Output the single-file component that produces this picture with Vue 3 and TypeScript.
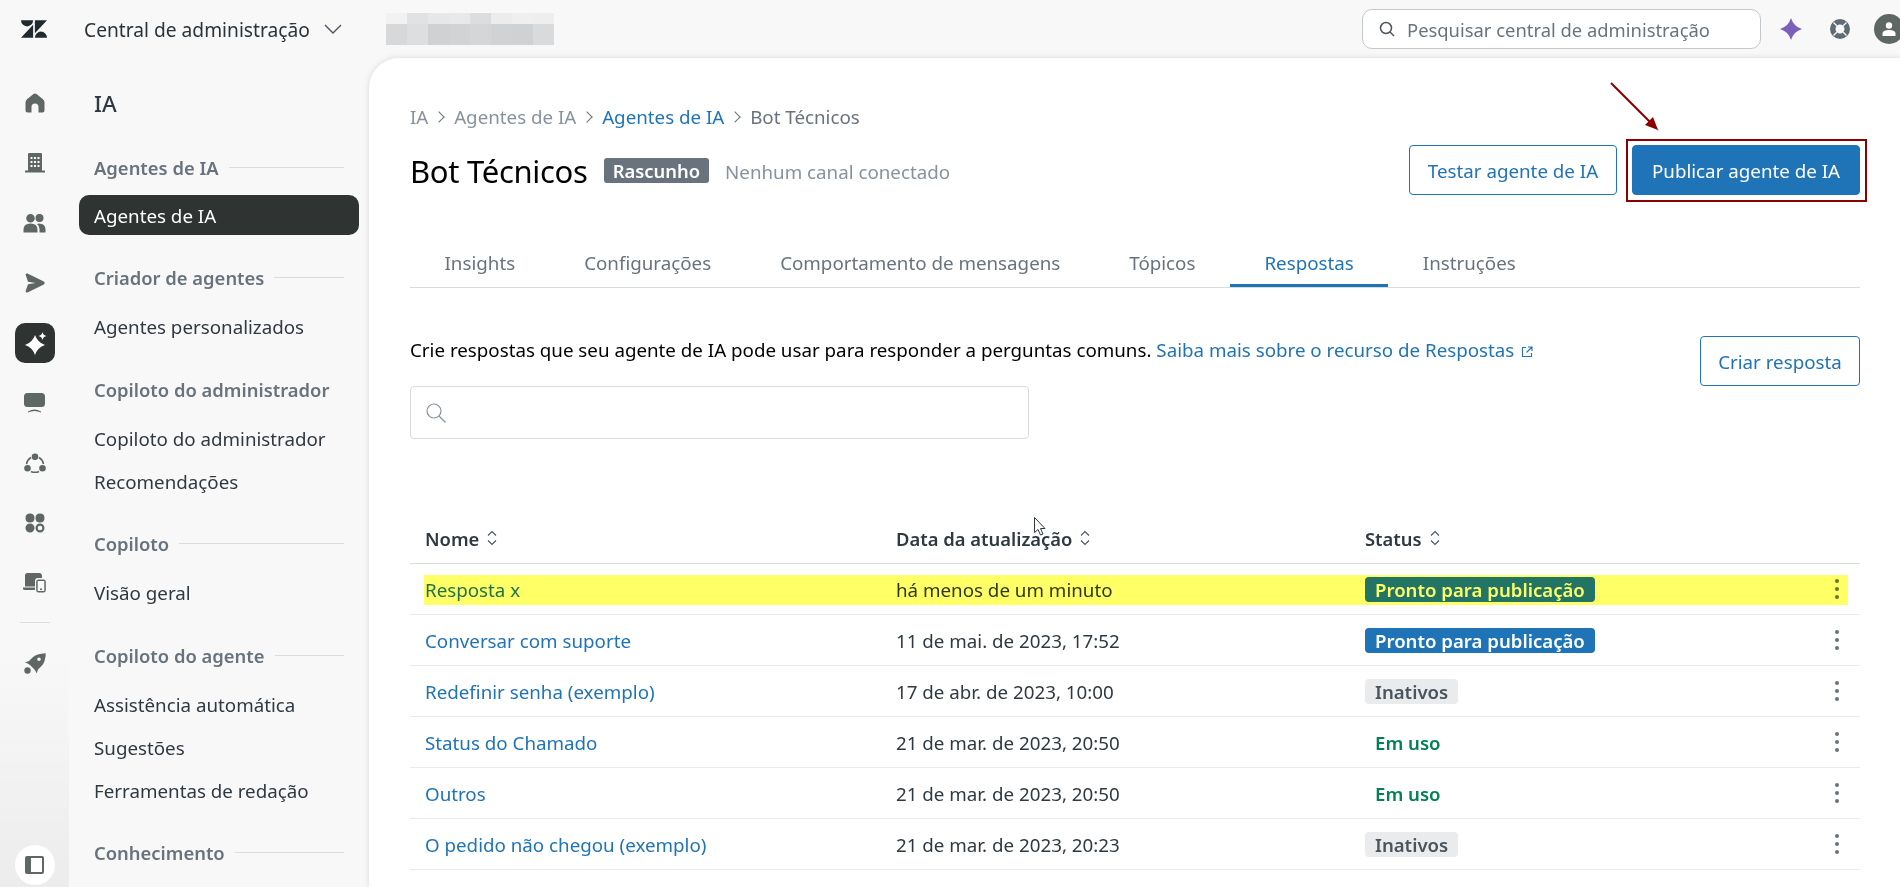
<template>
  <div class="admin">
    <header class="topbar">
      <svg class="logo" viewBox="0 0 30 20" width="26" height="20">
        <path d="M14 5V20H0ZM14 0A7 7 0 0 1 0 0ZM16 15V0H30ZM16 20A7 7 0 0 1 30 20Z" />
      </svg>
      <span class="product">Central de administração</span>
      <svg class="product-chevron" viewBox="0 0 18 10" width="18" height="10">
        <path d="M1 1l8 8 8-8" />
      </svg>
      <div class="blurred">
        <i v-for="(shade, i) in blurPixels" :key="i" :style="{ background: shade }"></i>
      </div>
      <div class="top-search">
        <svg viewBox="0 0 16 16" width="16" height="16">
          <circle cx="7" cy="7" r="5.5" />
          <path d="M11 11l4 4" />
        </svg>
        <span>Pesquisar central de administração</span>
      </div>
      <svg class="top-star" viewBox="0 0 22 22" width="22" height="22">
        <path d="M11 0Q13.500 8.500 22 11Q13.500 13.500 11 22Q8.500 13.500 0 11Q8.500 8.500 11 0Z" />
      </svg>
      <svg class="top-help" viewBox="0 0 20 20" width="20" height="20">
        <path
          fill-rule="evenodd"
          d="M10 0A10 10 0 1 0 10 20A10 10 0 1 0 10 0ZM10 5.500A4.500 4.500 0 1 1 10 14.500A4.500 4.500 0 1 1 10 5.500Z"
        />
        <path class="help-cuts" d="M3.500 3.500l3.300 3.300M16.500 3.500l-3.300 3.300M3.500 16.500l3.300-3.300M16.500 16.500l-3.300-3.300" />
      </svg>
      <div class="avatar">
        <svg viewBox="0 0 14 14" width="14" height="14">
          <circle cx="7" cy="3.500" r="3.200" />
          <path d="M.5 14V11.500Q.5 8 7 8T13.500 11.500V14Z" />
        </svg>
      </div>
    </header>

    <div class="body">
      <nav class="rail">
        <div v-for="icon in railIcons" :key="icon.name" class="rail-item">
          <svg v-if="icon.name === 'ai'" viewBox="0 0 40 40" width="40" height="40">
            <rect width="40" height="40" rx="10" fill="#2f3332" />
            <path fill="#fff" :d="icon.d" />
          </svg>
          <svg v-else :viewBox="`0 0 ${icon.w} 20`" :width="icon.w" height="20">
            <path fill-rule="evenodd" :d="icon.d" />
            <path v-if="icon.line" class="rail-line" :d="icon.line" />
          </svg>
        </div>
        <hr class="rail-sep" />
        <svg class="rail-rocket" viewBox="0 0 22 21" width="22" height="21">
          <path
            fill-rule="evenodd"
            d="M21.800.2Q12.500.5 8.500 4.500L5 8 1 9.500Q4 10 6 12L10 16Q12 18 12.500 20.500L14 16.500 17.500 13Q21.500 9 21.800.2ZM15 4.500A1.800 1.800 0 1 1 15 8.100A1.800 1.800 0 1 1 15 4.500Z"
          />
          <circle cx="3.500" cy="17.500" r="3.200" />
        </svg>
        <button class="rail-collapse" type="button">
          <svg viewBox="0 0 19 18" width="19" height="18">
            <path
              fill-rule="evenodd"
              d="M2 0H17Q19 0 19 2V16Q19 18 17 18H2Q0 18 0 16V2Q0 0 2 0ZM6 2V16H17V2Z"
            />
          </svg>
        </button>
      </nav>

      <aside class="subnav">
        <h2>IA</h2>
        <section v-for="group in navGroups" :key="group.title" class="nav-group">
          <h3>
            <span>{{ group.title }}</span>
            <i v-if="group.rule"></i>
          </h3>
          <a
            v-for="item in group.items"
            :key="item"
            class="nav-item"
            :class="{ active: item === 'Agentes de IA' }"
          >{{ item }}</a>
        </section>
      </aside>

      <main class="card">
        <ol class="crumbs">
          <li>IA</li>
          <li>Agentes de IA</li>
          <li class="crumb-link">Agentes de IA</li>
          <li class="crumb-last">Bot Técnicos</li>
        </ol>

        <div class="title-row">
          <h1>Bot Técnicos</h1>
          <span class="draft">Rascunho</span>
          <span class="channel">Nenhum canal conectado</span>
          <button class="btn test" type="button">Testar agente de IA</button>
          <button class="btn publish" type="button">Publicar agente de IA</button>
        </div>

        <div class="tabs">
          <span v-for="tab in tabs" :key="tab" class="tab" :class="{ current: tab === 'Respostas' }">{{ tab }}</span>
        </div>

        <div class="intro">
          <div class="intro-main">
            <p>
              Crie respostas que seu agente de IA pode usar para responder a perguntas comuns.
              <a>Saiba mais sobre o recurso de Respostas
                <svg viewBox="0 0 12 12" width="12" height="12">
                  <path d="M5 1.500H1.500V10.500H10.500V7M7 1H11V5M11 1L5.500 6.500" />
                </svg>
              </a>
            </p>
            <div class="search">
              <svg viewBox="0 0 20 20" width="20" height="20">
                <circle cx="8" cy="8" r="7" />
                <path d="M13 13l6.500 6.500" />
              </svg>
            </div>
          </div>
          <button class="btn create" type="button">Criar resposta</button>
        </div>

        <div class="table">
          <div class="row head">
            <span v-for="col in columns" :key="col">
              {{ col }}
              <svg viewBox="0 0 12 16" width="12" height="16">
                <path d="M2 5.500L6 1.500L10 5.500M2 10.500L6 14.500L10 10.500" />
              </svg>
            </span>
          </div>
          <div v-for="row in rows" :key="row.name" class="row" :class="{ marked: row.marked }">
            <a class="name">{{ row.name }}</a>
            <span class="date">{{ row.date }}</span>
            <span><em class="status" :class="row.kind">{{ row.status }}</em></span>
            <svg class="kebab" viewBox="0 0 4 20" width="4" height="20">
              <circle cx="2" cy="2" r="2" />
              <circle cx="2" cy="10" r="2" />
              <circle cx="2" cy="18" r="2" />
            </svg>
            <i v-if="row.marked" class="marker"></i>
          </div>
        </div>
      </main>
    </div>

    <svg class="arrow" viewBox="0 0 70 66" width="70" height="66">
      <path class="arrow-shadow" d="M13 9L59 55" />
      <path class="arrow-line" d="M11 7L54 50" />
      <path class="arrow-head" d="M58 54L45 49L53 41Z" />
    </svg>

    <svg class="pointer" viewBox="0 0 12 19" width="12" height="19">
      <path d="M.5.5V15.500L4 12.500L6.500 18L9 17L6.500 11.500H11Z" />
    </svg>
  </div>
</template>

<script setup lang="ts">
interface RailIcon {
  name: string
  w: number
  d: string
  line?: string
}

type StatusKind = 'ready' | 'idle' | 'live'

interface AnswerRow {
  name: string
  date: string
  status: string
  kind: StatusKind
  marked?: boolean
}

const blurPixels = [
  '#f2f2f2', '#e1e2e3', '#e6e7e8', '#e9e9ea', '#dcddde', '#ececed', '#efefef', '#eeeeee',
  '#d6d8d9', '#dddedf', '#cfd1d3', '#d1d3d5', '#d4d6d8', '#d0d2d4', '#cfd1d3', '#d9dadb'
]

const railIcons: RailIcon[] = [
  {
    name: 'home',
    w: 20,
    d: 'M8.500 1L2 6.200Q.5 7.500.5 9.500V17.500Q.5 19.500 2.500 19.500H6.500V14A3.500 3.500 0 0 1 13.500 14V19.500H17.500Q19.500 19.500 19.500 17.500V9.500Q19.500 7.500 18 6.200L11.500 1Q10 0 8.500 1Z'
  },
  {
    name: 'org',
    w: 20,
    d: 'M4 0H16Q17 0 17 1V17.500H20V19.500H0V17.500H3V1Q3 0 4 0ZM5.500 4V6H7.500V4ZM9 4V6H11V4ZM12.500 4V6H14.500V4ZM5.500 8V10H7.500V8ZM9 8V10H11V8ZM12.500 8V10H14.500V8ZM5.500 12V14H7.500V12ZM9 12V14H11V12ZM12.500 12V14H14.500V12Z'
  },
  {
    name: 'people',
    w: 23,
    d: 'M7.500 1A4.300 4.300 0 1 0 7.500 9.600A4.300 4.300 0 1 0 7.500 1ZM16.500 1A4 4 0 1 0 16.500 9A4 4 0 1 0 16.500 1ZM.5 19.500V16.500Q.5 10.500 7.500 10.500T14.500 16.500V19.500ZM16 10.500Q22.500 10.500 22.500 16.500V19.500H16.500V16Q16.500 13 14 11Z'
  },
  {
    name: 'send',
    w: 20,
    d: 'M2.500.6L18.800 8.600Q20.500 10 18.800 11.400L2.500 19.400Q.3 20 .7 18L3 11.200L10.500 10L3 8.800L.7 2Q.3 0 2.500.6Z'
  },
  {
    name: 'ai',
    w: 40,
    d: 'M20 12Q22.500 19.500 30 22Q22.500 24.500 20 32Q17.500 24.500 10 22Q17.500 19.500 20 12ZM27.500 9Q28.200 12.300 31.500 13Q28.200 13.700 27.500 17Q26.800 13.700 23.500 13Q26.800 12.300 27.500 9Z'
  },
  {
    name: 'chat',
    w: 21,
    d: 'M3.500 0H17.500Q21 0 21 3.500V10.500Q21 14 17.500 14H3.500Q0 14 0 10.500V3.500Q0 0 3.500 0ZM4 18.500Q10.500 14.500 17 18.500V19.500Q10.500 16.500 4 19.500Z'
  },
  {
    name: 'network',
    w: 22,
    d: 'M11 .5A3.300 3.300 0 1 0 11 7.100A3.300 3.300 0 1 0 11 .5ZM3.500 12A3.300 3.300 0 1 0 3.500 18.600A3.300 3.300 0 1 0 3.500 12ZM18.500 12A3.300 3.300 0 1 0 18.500 18.600A3.300 3.300 0 1 0 18.500 12Z',
    line: 'M7 4.500A9.500 9.500 0 0 0 2.500 11M15 4.500A9.500 9.500 0 0 1 19.500 11M7 18.500A9.500 9.500 0 0 0 15 18.500'
  },
  {
    name: 'apps',
    w: 20,
    d: 'M5 .5Q9.500.5 9.500 5T5 9.500T.5 5T5 .5ZM15 .5Q19.500.5 19.500 5T15 9.500T10.500 5T15 .5ZM5 10.500A4.500 4.500 0 1 0 5 19.500A4.500 4.500 0 1 0 5 10.500ZM15 10.500A4.500 4.500 0 1 0 15 19.500A4.500 4.500 0 1 0 15 10.500ZM15 12.700A2.300 2.300 0 1 1 15 17.300A2.300 2.300 0 1 1 15 12.700Z'
  },
  {
    name: 'devices',
    w: 23,
    d: 'M4.500 0H16Q19 0 19 3V5H15Q12 5 12 8V13.500H2V2.500Q2 0 4.500 0ZM0 14.500H12V17H1.500Q0 17 0 15.500ZM15.500 6.500H20.500Q22.800 6.500 22.800 8.800V17Q22.800 19.500 20.500 19.500H15.500Q13.200 19.500 13.200 17V8.800Q13.200 6.500 15.500 6.500ZM14.700 8V18H21.300V8ZM17 15.500H19V17H17Z'
  }
]

const navGroups = [
  { title: 'Agentes de IA', rule: true, items: ['Agentes de IA'] },
  { title: 'Criador de agentes', rule: true, items: ['Agentes personalizados'] },
  { title: 'Copiloto do administrador', rule: false, items: ['Copiloto do administrador', 'Recomendações'] },
  { title: 'Copiloto', rule: true, items: ['Visão geral'] },
  { title: 'Copiloto do agente', rule: true, items: ['Assistência automática', 'Sugestões', 'Ferramentas de redação'] },
  { title: 'Conhecimento', rule: true, items: [] }
]

const tabs = ['Insights', 'Configurações', 'Comportamento de mensagens', 'Tópicos', 'Respostas', 'Instruções']

const columns = ['Nome', 'Data da atualização', 'Status']

const rows: AnswerRow[] = [
  { name: 'Resposta x', date: 'há menos de um minuto', status: 'Pronto para publicação', kind: 'ready', marked: true },
  { name: 'Conversar com suporte', date: '11 de mai. de 2023, 17:52', status: 'Pronto para publicação', kind: 'ready' },
  { name: 'Redefinir senha (exemplo)', date: '17 de abr. de 2023, 10:00', status: 'Inativos', kind: 'idle' },
  { name: 'Status do Chamado', date: '21 de mar. de 2023, 20:50', status: 'Em uso', kind: 'live' },
  { name: 'Outros', date: '21 de mar. de 2023, 20:50', status: 'Em uso', kind: 'live' },
  { name: 'O pedido não chegou (exemplo)', date: '21 de mar. de 2023, 20:23', status: 'Inativos', kind: 'idle' }
]
</script>

<style>
html,
body {
  margin: 0;
  overflow: hidden;
}
</style>

<style scoped>
.admin {
  position: relative;
  display: flex;
  flex-direction: column;
  width: 1900px;
  height: 887px;
  overflow: hidden;
  color: #2f3941;
  background: #f8f8f8;
  font-family: "Noto Sans", "Liberation Sans", sans-serif;
  font-size: 18.75px;
}

svg {
  display: block;
  flex: none;
}

.topbar {
  display: flex;
  align-items: center;
  flex: none;
  height: 58px;
}

.logo {
  margin-left: 21px;
  fill: #1f2a2e;
}

.product {
  margin-left: 37px;
  font-size: 19.2px;
  color: #2a3338;
}

.product-chevron {
  margin-left: 14px;
  fill: none;
  stroke: #49545c;
  stroke-width: 1.4;
}

.blurred {
  display: grid;
  grid-template-columns: repeat(8, 21px);
  grid-template-rows: 11px 21px;
  margin-left: 44px;
}

.top-search {
  display: flex;
  align-items: center;
  gap: 12px;
  box-sizing: border-box;
  width: 399px;
  height: 40px;
  margin-left: auto;
  padding-left: 16px;
  color: #68737d;
  background: #fff;
  border: 1px solid #c2c8cc;
  border-radius: 10px;
  font-size: 18.4px;
}

.top-search svg {
  fill: none;
  stroke: #49545c;
  stroke-width: 1.5;
}

.top-star {
  margin-left: 19px;
  fill: #7a5fbb;
}

.top-help {
  margin-left: 28px;
  fill: #5f6b75;
}

.help-cuts {
  stroke: #f8f8f8;
  stroke-width: 1.3;
}

.avatar {
  display: flex;
  align-items: center;
  justify-content: center;
  flex: none;
  width: 30px;
  height: 30px;
  margin-right: -4px;
  margin-left: 24px;
  background: #5f6764;
  border-radius: 50%;
  fill: #fff;
}

.body {
  display: flex;
  flex: 1;
  min-height: 0;
}

.rail {
  display: flex;
  flex-direction: column;
  align-items: center;
  flex: none;
  box-sizing: border-box;
  width: 69px;
  padding-top: 15px;
  padding-bottom: 2px;
  background: linear-gradient(#f8f8f8 0, #f8f8f8 72%, #ececec 100%);
  fill: #5f6764;
}

.rail-item {
  display: flex;
  align-items: center;
  justify-content: center;
  flex: none;
  width: 40px;
  height: 60px;
}

.rail-line {
  fill: none;
  stroke: #5f6764;
  stroke-width: 1.6;
}

.rail-sep {
  flex: none;
  width: 30px;
  height: 1px;
  margin: 9px 0 30px;
  background: #dcdfe0;
  border: 0;
}

.rail-collapse {
  display: flex;
  align-items: center;
  justify-content: center;
  width: 40px;
  height: 40px;
  margin-top: auto;
  padding: 0;
  background: #fff;
  border: 0;
  border-radius: 50%;
  fill: #5f6764;
}

.subnav {
  flex: none;
  box-sizing: border-box;
  width: 300px;
  padding: 31px 0 0 25px;
}

.subnav h2 {
  margin: 0 0 36px;
  color: #2f3941;
  font-size: 22.5px;
  font-weight: 500;
  line-height: 30px;
}

.nav-group {
  margin-bottom: 30.5px;
}

.nav-group h3 {
  display: flex;
  align-items: center;
  gap: 10px;
  width: 250px;
  height: 24px;
  margin: 0 0 17px;
  color: #68737d;
  font-size: 18.4px;
  font-weight: 600;
  white-space: nowrap;
}

.nav-group h3 i {
  flex: 1;
  height: 1px;
  background: #d8dcde;
}

.nav-item {
  display: flex;
  align-items: center;
  box-sizing: border-box;
  width: 280px;
  height: 40px;
  margin-left: -15px;
  padding-left: 15px;
  color: #2f3941;
}

.nav-item + .nav-item {
  margin-top: 3px;
}

.nav-item.active {
  margin-top: -1px;
  margin-bottom: 1px;
  color: #fff;
  background: #2f3332;
  border-radius: 10px;
}

.card {
  flex: 1;
  min-width: 0;
  padding: 47px 40px 0 41px;
  background: #fff;
  border-top-left-radius: 30px;
  box-shadow: 0 0 6px rgba(0, 0, 0, 0.13);
}

.crumbs {
  display: flex;
  margin: 0;
  padding: 0;
  color: #87929d;
  line-height: 24px;
  list-style: none;
}

.crumbs li + li::before {
  content: "";
  display: inline-block;
  width: 7px;
  height: 7px;
  margin: 0 11.500px 3px 6.300px;
  border-top: 1px solid #68737d;
  border-right: 1px solid #68737d;
  transform: rotate(45deg);
}

.crumb-link {
  color: #1f73b7;
}

.crumb-last {
  color: #68737d;
}

.title-row {
  display: flex;
  align-items: center;
  height: 50px;
  margin-top: 16px;
}

.title-row h1 {
  margin: 1px 0 0;
  color: #000;
  font-size: 31px;
  font-weight: 400;
  letter-spacing: -0.3px;
}

.draft {
  margin: 1px 0 0 16px;
  padding: 0 9px;
  color: #fff;
  background: #68737d;
  border-radius: 3px;
  font-size: 18.4px;
  font-weight: 600;
  line-height: 25px;
}

.channel {
  margin: 2px auto 0 16px;
  color: #87929d;
}

.btn {
  box-sizing: border-box;
  height: 50px;
  color: #1f73b7;
  background: #fff;
  border: 1px solid #1f73b7;
  border-radius: 4px;
  font: inherit;
}

.test {
  width: 208px;
}

.publish {
  position: relative;
  width: 228px;
  margin-left: 15px;
  color: #fff;
  background: #1f73b7;
}

.publish::after {
  content: "";
  position: absolute;
  top: -7px;
  right: -8px;
  bottom: -8px;
  left: -7px;
  border: 2px solid #8b0000;
}

.tabs {
  display: flex;
  box-sizing: border-box;
  height: 46px;
  margin-top: 47px;
  border-bottom: 1px solid #d8dcde;
}

.tab {
  box-sizing: border-box;
  height: 45px;
  padding: 8px 34.500px 0;
  color: #68737d;
}

.tab.current {
  color: #1f73b7;
  border-bottom: 3px solid #1f73b7;
}

.intro {
  display: flex;
  justify-content: space-between;
  margin-top: 48px;
}

.intro p {
  height: 30px;
  margin: -1px 0 0;
  color: #000;
  line-height: 30px;
}

.intro a {
  color: #1f73b7;
}

.intro a svg {
  display: inline-block;
  margin-left: 2px;
  vertical-align: -1px;
  fill: none;
  stroke: #1f73b7;
  stroke-width: 1.1;
}

.search {
  display: flex;
  align-items: center;
  box-sizing: border-box;
  width: 619px;
  height: 53px;
  margin-top: 21px;
  padding-left: 15px;
  border: 1px solid #d8dcde;
  border-radius: 4px;
}

.search svg {
  fill: none;
  stroke: #87929d;
  stroke-width: 1.2;
}

.create {
  width: 160px;
  flex: none;
}

.table {
  margin-top: 74px;
}

.row {
  position: relative;
  display: grid;
  grid-template-columns: 471px 469px 1fr 46px;
  align-items: center;
  box-sizing: border-box;
  height: 51px;
  padding-left: 15px;
  border-bottom: 1px solid #e9ebed;
}

.row.head {
  border-bottom-color: #d8dcde;
  font-size: 18.4px;
  font-weight: 600;
}

.row.head span {
  display: flex;
  align-items: center;
  gap: 7px;
}

.name {
  color: #1f73b7;
}

.status {
  display: inline-block;
  padding: 0 10px;
  border-radius: 4px;
  font-size: 18.6px;
  font-style: normal;
  font-weight: 600;
  line-height: 25px;
}

.status.ready {
  color: #fff;
  background: #1f73b7;
}

.marked .status.ready {
  background: #2274fc;
}

.status.idle {
  color: #49545c;
  background: #e9ebed;
}

.status.live {
  color: #038153;
}

.kebab {
  justify-self: center;
  fill: #68737d;
}

.head svg {
  fill: none;
  stroke: #49545c;
  stroke-width: 1.1;
}

.marker {
  position: absolute;
  top: 11px;
  right: 12px;
  bottom: 9px;
  left: 14px;
  background: #ffff66;
  mix-blend-mode: multiply;
}

.arrow {
  position: absolute;
  top: 76px;
  left: 1600px;
}

.arrow-line {
  fill: none;
  stroke: #8b0000;
  stroke-width: 2;
}

.arrow-shadow {
  fill: none;
  stroke: rgba(0, 0, 0, 0.15);
  stroke-width: 2;
}

.arrow-head {
  fill: #8b0000;
}

.pointer {
  position: absolute;
  top: 517px;
  left: 1034px;
  fill: #fff;
  stroke: #2f3941;
  stroke-width: 1;
}
</style>
